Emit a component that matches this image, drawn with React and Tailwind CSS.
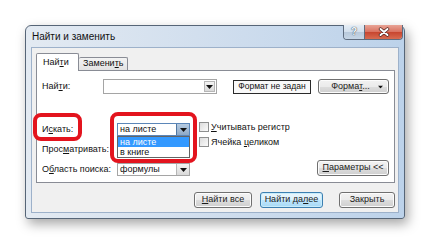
import React from "react";

function Tri({ className = "" }) {
  return (
    <svg width="7" height="4" viewBox="0 0 7 4" className={className}>
      <polygon points="0,0 7,0 3.5,4" fill="#111" />
    </svg>
  );
}

function Btn({ children, className = "", def = false }) {
  return (
    <div
      className={`flex items-center justify-center rounded-[3px] border text-[9px] text-[#1b1b1b] ${
        def
          ? "border-[#3c7fb1] bg-[linear-gradient(#eaf6fd_0%,#d9f0fc_50%,#bee6fd_51%,#a7d9f5_100%)] shadow-[inset_0_0_0_1px_#c8ecfb]"
          : "border-[#707070] bg-[linear-gradient(#f2f2f2_0%,#ebebeb_50%,#dddddd_51%,#cfcfcf_100%)] shadow-[inset_0_0_0_1px_#fcfcfc]"
      } ${className}`}
    >
      {children}
    </div>
  );
}

function ArrowBox({ hot = false }) {
  return (
    <div
      className={`flex h-full w-[13px] shrink-0 items-center justify-center border-l ${
        hot
          ? "border-[#4f77a3] bg-[linear-gradient(#b6cbe2,#8ea9c6)]"
          : "border-[#b6b6b6] bg-[linear-gradient(#f4f4f4,#d9d9d9)]"
      }`}
    >
      <Tri />
    </div>
  );
}

function Combo({ text, hot = false, className = "" }) {
  return (
    <div
      className={`flex h-[13px] w-[73px] items-stretch border bg-white ${
        hot ? "border-[#5b86b8]" : "border-[#a5a5a5]"
      } ${className}`}
    >
      <div className="flex flex-1 items-center pl-[2px] text-[9px] leading-none text-[#111]">
        {text}
      </div>
      <ArrowBox hot={hot} />
    </div>
  );
}

function Check({ children }) {
  return (
    <div className="flex h-[10px] items-center">
      <div className="h-[10px] w-[10px] shrink-0 border border-[#8e8f8f] bg-[linear-gradient(135deg,#dcdcdc,#fbfbfb)]" />
      <div className="ml-[2px] text-[9px] leading-none text-[#111]">{children}</div>
    </div>
  );
}

const U = ({ children }) => (
  <span className="underline decoration-1 underline-offset-[1px]">{children}</span>
);

export default function App() {
  return (
    <div className="h-[246px] w-[434px] overflow-hidden bg-white pl-[25px] pt-[25px] font-['Liberation_Sans',Arial,sans-serif]">
      {/* window */}
      <div className="flex h-[194px] w-[380px] flex-col rounded-t-[6px] rounded-b-[3px] border border-[#566577] bg-[linear-gradient(90deg,#e3eaf2_0%,#d2dfee_45%,#bcd2ea_100%)] shadow-[3px_5px_12px_rgba(0,0,0,0.35)]">
        {/* title bar */}
        <div className="flex h-[21px] shrink-0 items-start">
          <div className="mt-[5px] pl-[6px] text-[10px] leading-[12px] text-[#111]">
            Найти и заменить
          </div>
          <div className="ml-auto mr-[1px] flex h-[15px] -mt-[1px] overflow-hidden rounded-b-[4px] border border-t-0 border-[#5e6c7e]">
            <div className="flex h-full w-[21px] items-center justify-center border-r border-[#5e6c7e] bg-[linear-gradient(#e6eef6_0%,#d2dfec_50%,#b8c9db_51%,#c6d6e6_100%)] text-[10px] font-bold leading-none text-[#f4f7fa] [text-shadow:0_0_1px_#40505f,0_0_1px_#40505f]">
              ?
            </div>
            <div className="flex h-full w-[37px] items-center justify-center bg-[linear-gradient(#e8a496_0%,#d9705e_50%,#c7452f_51%,#d86b50_100%)]">
              <svg width="12" height="10" viewBox="0 0 12 10">
                <path d="M2.5 2 L9.5 8 M9.5 2 L2.5 8" stroke="#4a1f1a" strokeWidth="3.4" strokeLinecap="round" />
                <path d="M2.5 2 L9.5 8 M9.5 2 L2.5 8" stroke="#ffffff" strokeWidth="2" strokeLinecap="round" />
              </svg>
            </div>
          </div>
        </div>

        {/* client area */}
        <div className="mx-[5px] mb-[5px] flex flex-1 flex-col border border-[#9db1ca] bg-[#f0f0f0]">
          {/* tabs */}
          <div className="ml-[4px] mt-[5px] flex h-[17px] items-end">
            <div className="relative z-10 -mb-[1px] flex h-[18px] w-[43px] items-center rounded-t-[2px] border border-b-0 border-[#898c95] bg-white pl-[6px] text-[9px] text-[#111]">
              Най<U>т</U>и
            </div>
            <div className="flex h-[13px] w-[49px] items-center rounded-t-[2px] border border-l-0 border-b-0 border-[#898c95] bg-[linear-gradient(#f3f3f3,#e3e3e3)] pl-[4px] text-[9px] text-[#111]">
              Замени<U>т</U>ь
            </div>
          </div>

          {/* panel */}
          <div className="relative ml-[4px] h-[113px] w-[359px] border border-[#898c95] bg-white">
            {/* row 1 */}
            <div className="mt-[8px] flex h-[15px] items-center">
              <div className="w-[66px] pl-[5px] text-[9px] leading-none text-[#111]">
                Най<U>т</U>и:
              </div>
              <div className="flex h-[15px] w-[114px] items-stretch border border-[#a5a5a5] bg-white">
                <div className="flex-1" />
                <div className="my-[1px] mr-[1px] flex w-[11px] items-center justify-center border border-[#b6b6b6] bg-[linear-gradient(#f4f4f4,#d9d9d9)]">
                  <Tri />
                </div>
              </div>
              <div className="ml-[16px] flex h-[14px] w-[78px] items-center justify-center border border-[#2a2a2a] bg-[#f9f9f9] text-[8.5px] leading-none text-[#111]">
                Формат не задан
              </div>
              <Btn className="relative ml-[7px] h-[15px] w-[71px]">
                <span className="-ml-[6px]">
                  Форма<U>т</U>...
                </span>
                <Tri className="absolute right-[4px] top-[5px] scale-75" />
              </Btn>
            </div>

            {/* block 2 */}
            <div className="mt-[28px] flex">
              <div className="flex w-[153px] flex-col">
                <div className="mt-[1px] flex h-[13px] items-center">
                  <div className="w-[80px] pl-[5px] text-[9px] leading-none text-[#111]">
                    И<U>с</U>кать:
                  </div>
                  <Combo text="на листе" hot />
                </div>
                <div className="mt-[7px] flex h-[13px] items-center">
                  <div className="w-[80px] pl-[5px] text-[9px] leading-none text-[#111]">
                    Прос<U>м</U>атривать:
                  </div>
                  <Combo text="" />
                </div>
                <div className="mt-[7px] flex h-[13px] items-center">
                  <div className="w-[80px] pl-[5px] text-[9px] leading-none text-[#111]">
                    О<U>б</U>ласть поиска:
                  </div>
                  <Combo text="формулы" />
                </div>
              </div>
              <div className="ml-[9px] flex flex-col">
                <Check>
                  <U>У</U>читывать регистр
                </Check>
                <div className="mt-[5px]">
                  <Check>
                    Ячейка <U>ц</U>еликом
                  </Check>
                </div>
              </div>
              <Btn className="mb-0 ml-auto mr-[5px] h-[16px] w-[72px] self-end">
                <span>
                  <U>П</U>араметры &lt;&lt;
                </span>
              </Btn>
            </div>

            {/* dropdown list overlay */}
            <div className="absolute left-[80px] top-[65px] z-20 flex h-[22px] w-[73px] flex-col border border-[#646464] bg-white text-[9px] leading-none">
              <div className="flex h-[10px] items-center bg-[#3399ff] pl-[2px] text-white">на листе</div>
              <div className="flex h-[10px] items-center pl-[2px] text-[#111]">в книге</div>
            </div>

            {/* red highlight frames */}
            <div className="absolute -left-[4px] top-[42px] z-30 h-[28px] w-[49px] rounded-[8px] border-[4px] border-[#e3141e]" />
            <div className="absolute left-[73px] top-[41px] z-30 h-[51px] w-[87px] rounded-[8px] border-[4px] border-[#e3141e]" />
          </div>

          {/* bottom buttons */}
          <div className="mr-[3px] mt-[9px] flex justify-end">
            <Btn className="h-[16px] w-[58px]">
              <span>
                <U>Н</U>айти все
              </span>
            </Btn>
            <Btn def className="ml-[8px] h-[16px] w-[63px]">
              <span>
                Найти да<U>л</U>ее
              </span>
            </Btn>
            <Btn className="ml-[16px] h-[16px] w-[56px]">Закрыть</Btn>
          </div>
        </div>
      </div>
    </div>
  );
}
